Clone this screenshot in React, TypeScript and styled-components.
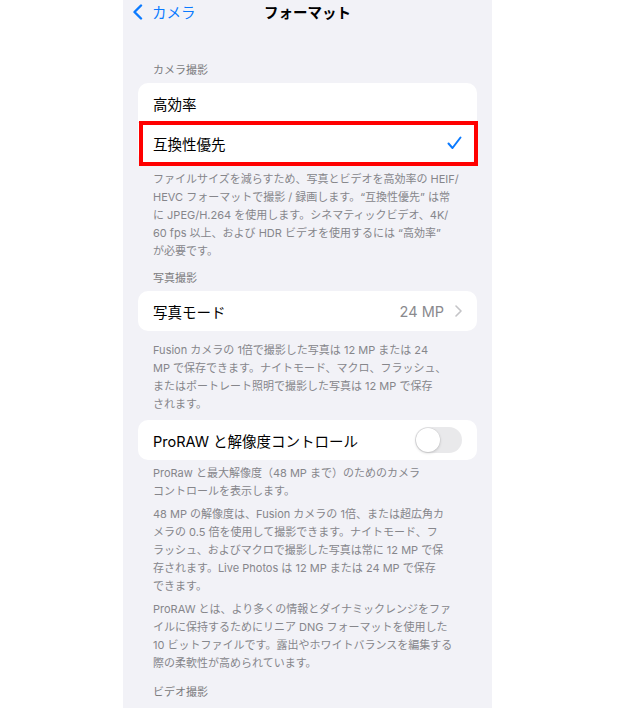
import styled, { createGlobalStyle } from "styled-components";

const GlobalStyle = createGlobalStyle`
    html, body {
        margin: 0;
        padding: 0;
        background: #ffffff;
    }
    body {
        font-family: Inter, "Noto Sans CJK JP", sans-serif;
        -webkit-font-smoothing: antialiased;
    }
`;

// the phone screen sits in the middle of a white page
const Screen = styled.div`
    width: 369px;
    height: 708px;
    margin-left: 123px;
    background: #f2f2f7;
    overflow: hidden;
`;

const NavBar = styled.div`
    display: grid;
    grid-template-columns: 1fr auto 1fr;
    align-items: center;
    height: 26px;
    padding-bottom: 3px;
    box-sizing: border-box;
`;

const BackButton = styled.div`
    display: flex;
    align-items: center;
    gap: 9px;
    padding-left: 9px;
    color: #0a7aff;
    font-size: 14.5px;
`;

const Title = styled.div`
    font-size: 14.5px;
    font-weight: 700;
    color: #000;
`;

const SectionHeader = styled.div<{ $top: number }>`
    margin-top: ${(p) => p.$top}px;
    margin-bottom: 6px;
    padding-left: 30px;
    height: 14px;
    line-height: 14px;
    font-size: 11px;
    color: #7c7c80;
`;

const Card = styled.div<{ $top?: number }>`
    margin: ${(p) => p.$top ?? 0}px 15px 0;
    background: #ffffff;
    border-radius: 10px;
`;

const Row = styled.div<{ $divider?: boolean }>`
    position: relative;
    display: flex;
    align-items: center;
    justify-content: space-between;
    height: 40px;
    padding: 0 15px;
    font-size: 14.5px;
    color: #000;
    ${(p) => p.$divider && "box-shadow: inset 0 -0.5px 0 #dcdce0;"}
`;

// red annotation frame drawn over the selected row
const Highlight = styled.div`
    position: absolute;
    inset: -2px -1px -3px 1px;
    border: 4px solid #ff0000;
    pointer-events: none;
`;

const Value = styled.div`
    display: flex;
    align-items: center;
    gap: 11px;
    color: #8a8a8e;
`;

const Footer = styled.div<{ $top: number }>`
    padding: ${(p) => p.$top}px 20px 0 30px;
    font-size: 11px;
    line-height: 18px;
    color: #86868b;
`;

const Para = styled.div<{ $gap?: number }>`
    margin-top: ${(p) => p.$gap ?? 0}px;
`;

const Line = styled.div`
    white-space: nowrap;
`;

const Toggle = styled.div`
    position: relative;
    width: 47px;
    height: 26px;
    border-radius: 13px;
    background: #e9e9eb;
`;

const Knob = styled.div`
    position: absolute;
    top: 1px;
    left: 1px;
    width: 24px;
    height: 24px;
    border-radius: 50%;
    background: #ffffff;
    box-shadow: 0 1px 3px rgba(0, 0, 0, 0.18), 0 0 0 0.5px rgba(0, 0, 0, 0.06);
`;

const BackChevron = () => (
    <svg width="11" height="16" viewBox="0 0 11 16">
        <path
            d="M9 1.5 L2.5 8 L9 14.5"
            fill="none"
            stroke="#0a7aff"
            strokeWidth="2.4"
            strokeLinecap="round"
            strokeLinejoin="round"
        />
    </svg>
);

const Check = () => (
    <svg width="15" height="14" viewBox="0 0 15 14">
        <path
            d="M1.5 7.5 L5.5 12 L13.5 1.5"
            fill="none"
            stroke="#0a7aff"
            strokeWidth="2"
            strokeLinecap="round"
            strokeLinejoin="round"
        />
    </svg>
);

const Chevron = () => (
    <svg width="7" height="12" viewBox="0 0 7 12">
        <path
            d="M1 1 L6 6 L1 11"
            fill="none"
            stroke="#c4c4c7"
            strokeWidth="1.6"
            strokeLinecap="round"
            strokeLinejoin="round"
        />
    </svg>
);

const Lines = ({ lines }: { lines: string[] }) => (
    <>
        {lines.map((l, i) => (
            <Line key={i}>{l}</Line>
        ))}
    </>
);

export default function App() {
    return (
        <>
            <GlobalStyle />
            <Screen>
                <NavBar>
                    <BackButton>
                        <BackChevron />
                        カメラ
                    </BackButton>
                    <Title>フォーマット</Title>
                    <div />
                </NavBar>

                <SectionHeader $top={37}>カメラ撮影</SectionHeader>
                <Card>
                    <Row $divider>高効率</Row>
                    <Row>
                        互換性優先
                        <Check />
                        <Highlight />
                    </Row>
                </Card>
                <Footer $top={7}>
                    <Lines
                        lines={[
                            "ファイルサイズを減らすため、写真とビデオを高効率の HEIF/",
                            "HEVC フォーマットで撮影 / 録画します。“互換性優先” は常",
                            "に JPEG/H.264 を使用します。シネマティックビデオ、4K/",
                            "60 fps 以上、および HDR ビデオを使用するには “高効率”",
                            "が必要です。",
                        ]}
                    />
                </Footer>

                <SectionHeader $top={11}>写真撮影</SectionHeader>
                <Card>
                    <Row>
                        写真モード
                        <Value>
                            24 MP
                            <Chevron />
                        </Value>
                    </Row>
                </Card>
                <Footer $top={10}>
                    <Lines
                        lines={[
                            "Fusion カメラの 1倍で撮影した写真は 12 MP または 24",
                            "MP で保存できます。ナイトモード、マクロ、フラッシュ、",
                            "またはポートレート照明で撮影した写真は 12 MP で保存",
                            "されます。",
                        ]}
                    />
                </Footer>

                <Card $top={7}>
                    <Row>
                        ProRAW と解像度コントロール
                        <Toggle>
                            <Knob />
                        </Toggle>
                    </Row>
                </Card>
                <Footer $top={4}>
                    <Para>
                        <Lines
                            lines={[
                                "ProRaw と最大解像度（48 MP まで）のためのカメラ",
                                "コントロールを表示します。",
                            ]}
                        />
                    </Para>
                    <Para $gap={5}>
                        <Lines
                            lines={[
                                "48 MP の解像度は、Fusion カメラの 1倍、または超広角カ",
                                "メラの 0.5 倍を使用して撮影できます。ナイトモード、フ",
                                "ラッシュ、およびマクロで撮影した写真は常に 12 MP で保",
                                "存されます。Live Photos は 12 MP または 24 MP で保存",
                                "できます。",
                            ]}
                        />
                    </Para>
                    <Para $gap={5}>
                        <Lines
                            lines={[
                                "ProRAW とは、より多くの情報とダイナミックレンジをファ",
                                "イルに保持するためにリニア DNG フォーマットを使用した",
                                "10 ビットファイルです。露出やホワイトバランスを編集する",
                                "際の柔軟性が高められています。",
                            ]}
                        />
                    </Para>
                </Footer>

                <SectionHeader $top={13}>ビデオ撮影</SectionHeader>
            </Screen>
        </>
    );
}
